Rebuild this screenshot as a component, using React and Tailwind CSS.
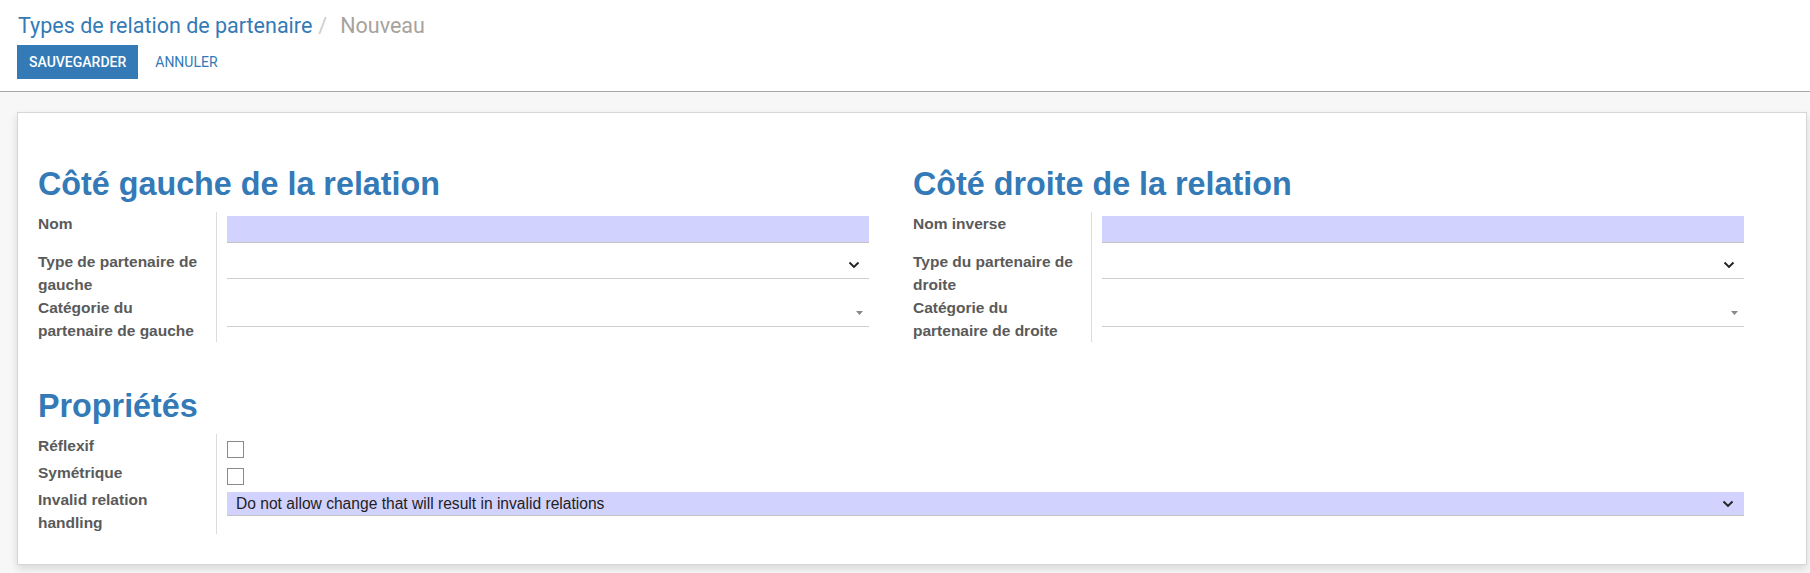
import React from "react"

const label = "w-[179px] shrink-0 border-r border-[#dcdcdc] text-[15.5px] leading-[23px] font-bold text-[#5a5a5a]"

function Chevron({ className }) {
  return (
    <svg width="12" height="8" viewBox="0 0 12 8" className={className}>
      <polyline points="1.5,1.5 6,6 10.5,1.5" fill="none" stroke="#222" strokeWidth="1.9" />
    </svg>
  )
}

function Caret() {
  return (
    <svg width="7" height="4" viewBox="0 0 7 4">
      <polygon points="0,0 7,0 3.5,4" fill="#888" />
    </svg>
  )
}

function Row({ text, h, children }) {
  return (
    <div className={`flex ${h}`}>
      <div className={label}>{text}</div>
      <div className="flex-1 pl-[10px]">{children}</div>
    </div>
  )
}

function RelationSide({ title, nameLabel, typeLabel, catLabel }) {
  return (
    <div className="pr-[44px]">
      <h2 className="text-[32.3px] leading-[38px] font-bold text-[#337ab7] mb-[9px]">{title}</h2>
      <div>
        <Row text={nameLabel} h="h-[38px]">
          <div className="mt-[4px] h-[27px] bg-[#d2d2ff] border-b border-[#c4c4c4]" />
        </Row>
        <Row text={typeLabel} h="h-[46px]">
          <div className="mt-[1px] h-[28px] border-b border-[#cfcfcf] flex items-center justify-end pr-[9px]">
            <Chevron />
          </div>
        </Row>
        <Row text={catLabel} h="h-[46px]">
          <div className="mt-[3px] h-[28px] border-b border-[#cfcfcf] flex items-center justify-end pr-[6px]">
            <Caret />
          </div>
        </Row>
      </div>
    </div>
  )
}

export default function App() {
  return (
    <div className="w-[1810px] min-h-[573px] bg-[#f7f7f7] font-['Liberation_Sans',Arial,sans-serif]">
      <div className="bg-white border-b border-[#a8a8a8] pl-[17px] pt-[10px] pb-[12px] font-['Roboto',sans-serif]">
        <div className="text-[21.5px] leading-[31px] pl-[1px]">
          <span className="text-[#337ab7]">Types de relation de partenaire</span>
          <span className="text-[#cccccc] ml-[6px] mr-[13px]">/</span>
          <span className="text-[#a8a29c]">Nouveau</span>
        </div>
        <div className="flex mt-[4px]">
          <button className="h-[34px] px-[12px] bg-[#337ab7] text-white text-[14px] font-medium">SAUVEGARDER</button>
          <button className="h-[34px] ml-[5px] px-[12px] text-[#337ab7] text-[14px]">ANNULER</button>
        </div>
      </div>

      <div className="pt-[20px] pl-[17px]">
        <div className="w-[1790px] h-[453px] bg-white border border-[#d6d6d6] shadow-[0_4px_8px_rgba(0,0,0,0.12)] pt-[52px] pl-[20px] pr-[18px] pb-[30px]">
          <div className="grid grid-cols-[875px_875px]">
            <RelationSide
              title="Côté gauche de la relation"
              nameLabel="Nom"
              typeLabel="Type de partenaire de gauche"
              catLabel={<>Catégorie du<br />partenaire de gauche</>}
            />
            <RelationSide
              title="Côté droite de la relation"
              nameLabel="Nom inverse"
              typeLabel="Type du partenaire de droite"
              catLabel={<>Catégorie du<br />partenaire de droite</>}
            />
          </div>

          <div className="mt-[45px] pr-[44px]">
            <h2 className="text-[32.3px] leading-[38px] font-bold text-[#337ab7] mb-[9px]">Propriétés</h2>
            <Row text="Réflexif" h="h-[27px]">
              <div className="mt-[7px] w-[17px] h-[17px] border border-[#8a8a8a] bg-white" />
            </Row>
            <Row text="Symétrique" h="h-[27px]">
              <div className="mt-[7px] w-[17px] h-[17px] border border-[#8a8a8a] bg-white" />
            </Row>
            <Row text={<>Invalid relation<br />handling</>} h="h-[46px]">
              <div className="mt-[4px] h-[24px] bg-[#d2d2ff] border-b border-[#c4c4c4] flex items-center justify-between pl-[9px] pr-[10px] text-[15.6px] text-[#222]">
                <span>Do not allow change that will result in invalid relations</span>
                <Chevron />
              </div>
            </Row>
          </div>
        </div>
      </div>
    </div>
  )
}
